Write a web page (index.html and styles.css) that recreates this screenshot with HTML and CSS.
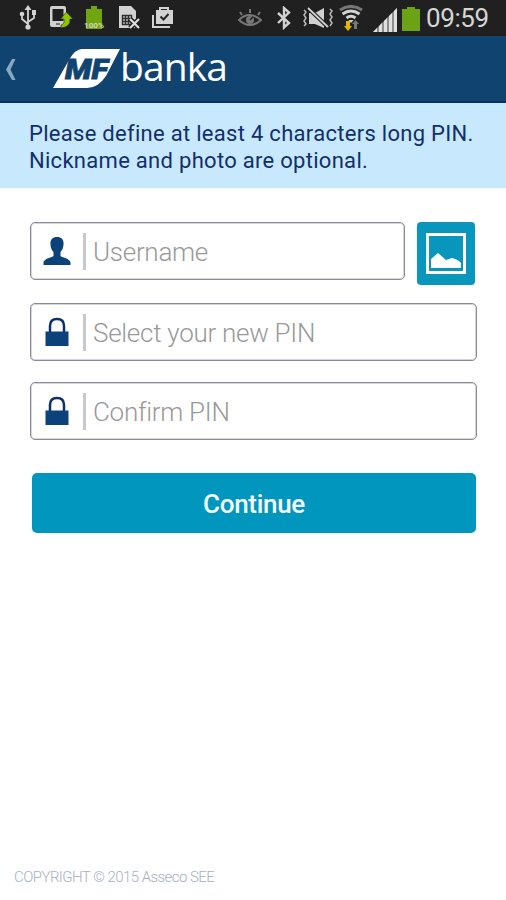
FILE: index.html
```html
<!DOCTYPE html>
<html lang="en">
<head>
<meta charset="utf-8">
<meta name="viewport" content="width=device-width">
<title>MF banka</title>
<link rel="stylesheet" href="styles.css">
</head>
<body>
<div class="status">
  <svg class="usb" width="18" height="26" viewBox="0 0 18 26"><g fill="none" stroke="#d2d2d2" stroke-width="1.8"><path d="M9 4v19M3 9v5l6 5M15 8v5l-6 4"/></g><g fill="#d2d2d2"><path d="M9 0l3.500 5h-7zM13 5h4v5h-4z"/><circle cx="3" cy="9" r="2.300"/><circle cx="9" cy="22" r="2.600"/></g></svg>
  <svg class="phone" width="24" height="26" viewBox="0 0 24 26"><path fill="#d0d0d0" d="M3 1h12q2 0 2 2v17q0 2-2 2H3q-2 0-2-2V3q0-2 2-2z"/><path fill="#202020" d="M3.500 4h11v12h-11z"/><path fill="#777" d="M7 18h4v2H7z"/><path fill="#8fc400" stroke="#202020" stroke-width=".6" d="M17.500 7L24 14h-3q1 8-9 9v-3q4-1 3-6h-3.500z"/></svg>
  <svg class="full" width="22" height="26" viewBox="0 0 22 26"><path fill="#70a510" d="M8 1h6v3h5v20H3V4h5z"/><text x="1" y="23" textLength="20" lengthAdjust="spacingAndGlyphs" fill="#d1d7bf">100%</text></svg>
  <svg class="sim" width="22" height="26" viewBox="0 0 22 26"><path fill="#d2d2d2" d="M1 1h12l5 5v17H1z"/><path fill="none" stroke="#303030" stroke-width="1.400" d="M4.500 10.500h9v9h-9zM7.500 10v10M10.500 10v10M4 13.500h10M4 16.500h10"/><path stroke="#202020" stroke-width="5" d="M12 14l9 9M21 14l-9 9"/><path stroke="#ddd" stroke-width="2.200" d="M12 14l9 9M21 14l-9 9"/></svg>
  <svg class="case" width="24" height="24" viewBox="0 0 24 24"><path fill="none" stroke="#d2d2d2" stroke-width="2" d="M2 9v12h17M9 4V2h8v2"/><path fill="#d2d2d2" d="M5 4h17v14H5z"/><path fill="none" stroke="#282828" stroke-width="2" d="M9.500 10.500l3 3 5-5.500"/></svg>
  <svg class="eye" width="24" height="20" viewBox="0 0 24 20"><path fill="none" stroke="#777" stroke-width="2" d="M1 12q10-10 22 0q-11 10-22 0zM12 5V1M4 7L2 4M20 7l2-3"/><circle cx="12" cy="12" r="4" fill="#777"/><path stroke="#202020" stroke-width="1.400" d="M12 12l3-3"/></svg>
  <svg class="bt" width="16" height="24" viewBox="0 0 16 24"><path fill="none" stroke="#d2d2d2" stroke-width="2.400" d="M2 7l11 10-5 4.500V2l5 4.500L2 17"/></svg>
  <svg class="mute" width="30" height="22" viewBox="0 0 30 22"><path fill="#d0d0d0" d="M6 6h6l9-5v20l-9-4H6z"/><path fill="none" stroke="#bbb" stroke-width="1.500" d="M1 3l2 2-2 3 2 3-2 3 2 3-2 2M27 2l2 2-2 3 2 3-2 3 2 3-2 3"/><path stroke="#202020" stroke-width="4" d="M5 1l20 19"/><path stroke="#d0d0d0" stroke-width="1.800" d="M5 1l20 19"/></svg>
  <svg class="wifi" width="24" height="26" viewBox="0 0 24 26"><g fill="none" stroke-width="3"><path stroke="#777" d="M1 5q11-7 22 0"/><path stroke="#d2d2d2" d="M3.500 9q8.500-6 17 0M7.500 13q4.500-3.500 9 0"/></g><path fill="#d2d2d2" d="M9.500 15h5L12 18z"/><path fill="#e0b800" d="M7 16h4v5h2l-4 5-4-5h2z"/><path fill="#777" d="M15 24v-5h-2l3.500-4 3.500 4h-2v5z"/></svg>
  <svg class="signal" width="24" height="24" viewBox="0 0 24 24"><path fill="#8c8c8c" d="M0 24L24 0v24z"/><path fill="#e0e0e0" d="M0 24l4-4v4zM6 18l3-3v9H6zM11 13l3-3v14h-3zM16 8l3-3v19h-3zM21 3l3-3v24h-3z"/></svg>
  <svg class="battery" width="18" height="26" viewBox="0 0 18 26"><path fill="#6ba314" d="M5 1h8v2h5v22H0V3h5z"/></svg>
  <span class="clock">09:59</span>
</div>
<header class="header">
  <svg class="back" width="12" height="22" viewBox="0 0 12 22"><path fill="#8aa8c1" d="M7 0h3.500L5.500 10.500l5 10.500H7L1 10.500z"/></svg>
  <svg class="logo" width="68" height="41" viewBox="0 0 68 41"><path fill="#fff" d="M29 1H67L53 28Q45 40 34 40H0L16 12Q22 1 29 1z"/><text x="12" y="31" textLength="43" lengthAdjust="spacingAndGlyphs" fill="#10436f" stroke="#10436f" stroke-width=".8">MF</text></svg>
  <span class="brand">banka</span>
</header>
<p class="notice">Please define at least 4 characters long PIN.<br>Nickname and photo are optional.</p>
<main class="form">
  <div class="row">
    <div class="field"><svg width="28" height="30" viewBox="0 0 28 30"><path fill="#0b427a" d="M14 1c5 0 7 3 6.500 8-.5 4-2 6-3 7v4c3 2 8 2 10 6v3H.5v-3c2-4 7-4 10-6v-4c-1-1-2.500-3-3-7C7 4 9 1 14 1z"/></svg><span class="bar"></span><span class="hint">Username</span></div>
    <div class="photo"><svg width="42" height="42" viewBox="0 0 42 42"><path fill="none" stroke="#fff" stroke-width="3" d="M2.500 2.500h37v38h-37z"/><path fill="#fff" d="M6 36V27l7-6 8 7 6-2q7 2 9 5v5z"/></svg></div>
  </div>
  <div class="field"><svg width="28" height="30" viewBox="0 0 28 30"><path fill="none" stroke="#0b316b" stroke-width="2.500" d="M7 16V9q0-7 7-7t7 7v7"/><path fill="#0b427a" d="M2.500 14.500h23V29h-23z"/></svg><span class="bar"></span><span class="hint">Select your new PIN</span></div>
  <div class="field confirm"><svg width="28" height="30" viewBox="0 0 28 30"><path fill="none" stroke="#0b316b" stroke-width="2.500" d="M7 16V9q0-7 7-7t7 7v7"/><path fill="#0b427a" d="M2.500 14.500h23V29h-23z"/></svg><span class="bar"></span><span class="hint">Confirm PIN</span></div>
  <button class="continue">Continue</button>
</main>
<footer class="footer">COPYRIGHT © 2015 Asseco SEE</footer>
</body>
</html>
```
FILE: styles.css
```css
* { box-sizing: border-box; }
body { margin: 0; height: 900px; display: flex; flex-direction: column; background: #fff; font-family: Roboto, "Liberation Sans", sans-serif; overflow: hidden; }
svg { display: block; flex: none; }
.status { height: 36px; flex: none; display: flex; align-items: center; background: #202020; }
.usb { margin-left: 19px; }
.phone { margin-left: 12px; }
.full { margin-left: 10px; }
.full text { font-size: 7px; font-weight: 700; }
.sim { margin-left: 13px; }
.case { margin-left: 11px; }
.eye { margin-left: 63px; }
.bt { margin-left: 14px; }
.mute { margin-left: 11px; }
.wifi { margin-left: 6px; }
.signal { margin-left: 10px; margin-top: 4px; }
.battery { margin-left: 5px; margin-top: 2px; }
.clock { margin-left: 6px; color: #d5d5d5; font-size: 26px; line-height: 36px; letter-spacing: -.4px; white-space: nowrap; }
.header { height: 67px; flex: none; display: flex; background: #10436f; border-bottom: 2px solid #073161; }
.back { margin: 23px 0 0 5px; }
.logo { margin: 12px 0 0 36px; }
.logo text { font: italic 900 28px Roboto, sans-serif; }
.brand { color: #fff; font: 39px/44px "Open Sans", sans-serif; margin: 8px 0 0 -1px; letter-spacing: -.9px; }
.notice { height: 85px; flex: none; margin: 0; padding: 17px 0 0 29px; background: #c8e9fd; color: #122f6b; font-size: 22px; line-height: 27px; white-space: nowrap; letter-spacing: .29px; }
.form { padding: 34px 29px 0 30px; display: flex; flex-direction: column; }
.row { display: flex; align-items: flex-start; gap: 12px; margin-bottom: 18px; height: 63px; }
.row .field { width: 375px; }
.field { height: 58px; border: 1px solid #898b93; box-shadow: inset 0 0 0 1px #d6d7da; border-radius: 5px; display: flex; align-items: center; padding-left: 12px; }
.bar { width: 3px; height: 37px; background: #c7c9ce; margin-left: 12px; }
.hint { margin-left: 7px; padding-top: 2px; color: #999; font-size: 26px; font-weight: 300; line-height: 38px; letter-spacing: -.28px; white-space: nowrap; }
.photo { width: 58px; height: 63px; border-radius: 4px; background: #0996bc; display: flex; align-items: center; justify-content: center; padding-bottom: 2px; }
.confirm { margin-top: 21px; }
.continue { height: 60px; margin: 33px 1px 0 2px; padding: 1px 0 0; border: 0; border-radius: 5px; background: #0096bd; color: #f5fcff; font: 500 26px Roboto, sans-serif; letter-spacing: -.3px; }
.footer { margin: auto 0 13px 14px; color: #a6b0c0; font-size: 15px; font-weight: 300; line-height: 20px; letter-spacing: -.56px; }
```
